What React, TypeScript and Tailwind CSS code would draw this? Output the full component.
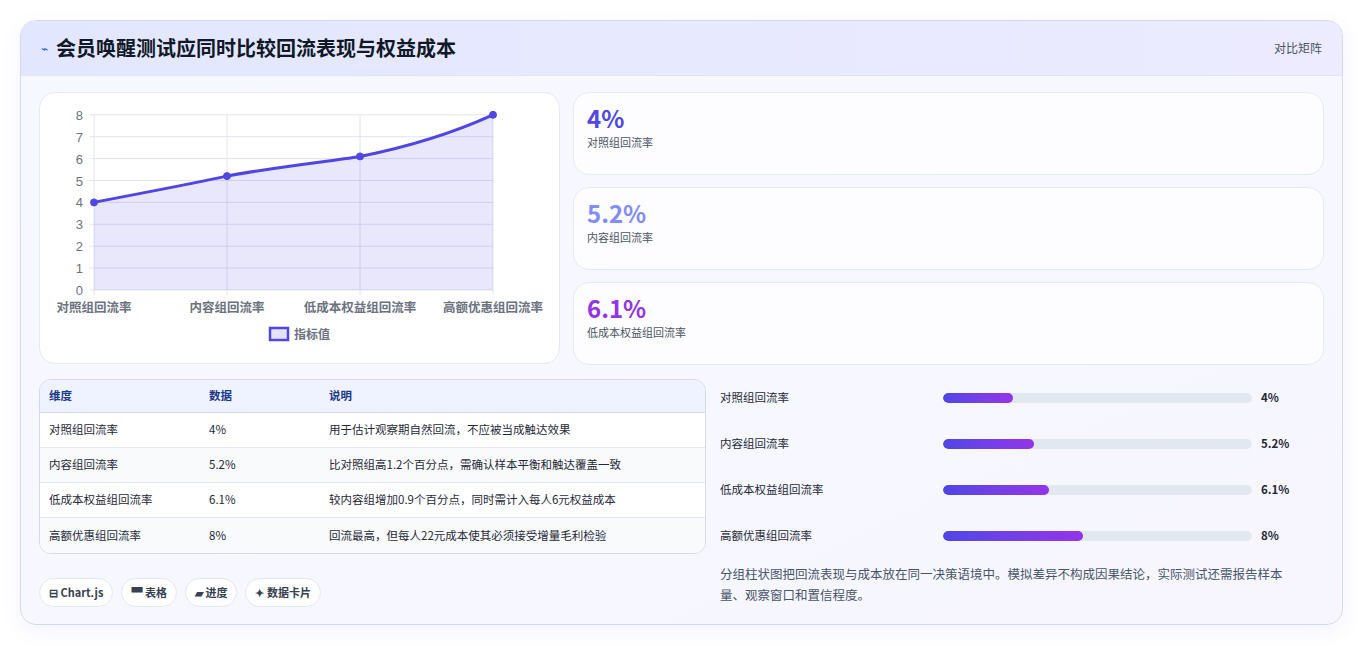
const font = { fontFamily: '"Noto Sans CJK SC", "Noto Sans", sans-serif' };

const rows = [
  { k: '对照组回流率', v: '4%', n: 4, d: '用于估计观察期自然回流，不应被当成触达效果' },
  { k: '内容组回流率', v: '5.2%', n: 5.2, d: '比对照组高1.2个百分点，需确认样本平衡和触达覆盖一致' },
  { k: '低成本权益组回流率', v: '6.1%', n: 6.1, d: '较内容组增加0.9个百分点，同时需计入每人6元权益成本' },
  { k: '高额优惠组回流率', v: '8%', n: 8, d: '回流最高，但每人22元成本使其必须接受增量毛利检验' },
];

function Chart() {
  const xs = [54, 187, 320, 453];
  const y = (v: number) => 197 - v * 21.9;
  const pts = rows.map((r, i) => [xs[i], y(r.n)]);
  const line = `M${pts[0][0]},${pts[0][1]} C100,${pts[0][1] - 9} 150,${pts[1][1] + 8} 187,${pts[1][1]} C240,${pts[1][1] - 10} 290,${pts[2][1] + 5} 320,${pts[2][1]} C380,${pts[2][1] - 12} 420,${pts[3][1] + 15} 453,${pts[3][1]}`;
  return (
    <svg width="520" height="271" className="block">
      {[0, 1, 2, 3, 4, 5, 6, 7, 8].map((v) => (
        <g key={v}>
          <line x1="50" x2="453" y1={y(v)} y2={y(v)} stroke="#e2e4ee" />
          <text x="43" y={y(v) + 5} fontSize="13" fill="#6b7280" textAnchor="end" fontFamily="Liberation Sans">{v}</text>
        </g>
      ))}
      {xs.map((x) => (
        <line key={x} x1={x} x2={x} y1={y(8)} y2={y(0) + 5} stroke="#e2e4ee" />
      ))}
      <path d={`${line} L453,${y(0)} L54,${y(0)} Z`} fill="rgba(79,70,229,0.13)" />
      <path d={line} fill="none" stroke="#4f46e5" strokeWidth="3" />
      {pts.map(([a, b], i) => (
        <circle key={i} cx={a} cy={b} r="3.5" fill="#4f46e5" stroke="#4f46e5" strokeWidth="1" />
      ))}
      {rows.map((r, i) => (
        <text key={i} x={xs[i]} y="219" fontSize="12.5" fill="#6b7280" textAnchor="middle" fontWeight="600" style={font}>{r.k}</text>
      ))}
      <rect x="230" y="235" width="18" height="12" fill="rgba(79,70,229,0.15)" stroke="#4f46e5" strokeWidth="2.5" />
      <text x="254" y="246" fontSize="12" fill="#6b7280" fontWeight="600" style={font}>指标值</text>
    </svg>
  );
}

export default function App() {
  const stats = [
    { v: '4%', l: '对照组回流率', c: 'text-[#4f46e5]' },
    { v: '5.2%', l: '内容组回流率', c: 'text-[#818cf8]' },
    { v: '6.1%', l: '低成本权益组回流率', c: 'text-[#9333ea]' },
  ];
  return (
    <div className="w-[1363px] h-[646px] bg-white p-5" style={font}>
      <div className="h-[605px] rounded-2xl border border-[#d4d8f5] bg-gradient-to-br from-[#f6f8ff] to-[#f7f6ff] overflow-hidden shadow-[0_6px_20px_rgba(99,102,241,0.08)]">
        <div className="h-[55px] flex items-center justify-between px-5 bg-gradient-to-r from-[#e2e7ff] to-[#ecebff] border-b border-[#e0e4fb]">
          <div className="flex items-center gap-2">
            <span className="text-[#2563eb] text-xs">⌁</span>
            <h1 className="text-xl font-bold text-[#111827]">会员唤醒测试应同时比较回流表现与权益成本</h1>
          </div>
          <span className="text-xs text-[#4b5563]">对比矩阵</span>
        </div>
        <div className="pl-[18px] pr-[18px] pt-[16px]">
          <div className="flex gap-[13px]">
            <div className="w-[521px] h-[272px] bg-white rounded-2xl border border-[#e5e8f5]">
              <Chart />
            </div>
            <div className="flex-1 flex flex-col gap-[12px]">
              {stats.map((s) => (
                <div key={s.l} className="h-[83px] bg-white/80 rounded-2xl border border-[#e5e8f5] px-[13px] pt-[9px]">
                  <div className={`text-2xl font-bold ${s.c}`}>{s.v}</div>
                  <div className="text-[11px] text-[#4b5563]">{s.l}</div>
                </div>
              ))}
            </div>
          </div>
          <div className="flex gap-[14px] mt-[14px]">
            <div className="w-[667px]">
              <div className="rounded-xl border border-[#d4daea] overflow-hidden bg-white/60 text-[11.5px]">
                <div className="grid grid-cols-[160px_120px_1fr] h-[33px] items-center px-[9px] bg-[#eef3ff] border-b border-[#d4daea] font-semibold text-[#1e3a8a]">
                  <span>维度</span><span>数据</span><span>说明</span>
                </div>
                {rows.map((r, i) => (
                  <div key={r.k} className={`grid grid-cols-[160px_120px_1fr] h-[35px] items-center px-[9px] text-[#1f2937] ${i < 3 ? 'border-b border-[#e5e8f0]' : ''} ${i % 2 ? 'bg-[#f8fafc]' : 'bg-white'}`}>
                    <span>{r.k}</span><span>{r.v}</span><span>{r.d}</span>
                  </div>
                ))}
              </div>
              <div className="flex gap-2 mt-[24px]">
                {['⊟ Chart.js', '▀ 表格', '▰ 进度', '✦ 数据卡片'].map((t) => (
                  <span key={t} className="h-[29px] px-[9px] flex items-center rounded-full border border-[#e2e6f0] bg-white text-[11px] font-semibold text-[#374151]">{t}</span>
                ))}
              </div>
            </div>
            <div className="flex-1 pr-5">
              <div className="flex flex-col gap-[28px] pt-[10px]">
                {rows.map((r) => (
                  <div key={r.k} className="flex items-center h-[18px] text-[11.5px] text-[#1f2937]">
                    <span className="w-[223px]">{r.k}</span>
                    <div className="w-[309px] h-[10px] rounded-full bg-[#e2e8f0] overflow-hidden">
                      <div className="h-full rounded-full bg-gradient-to-r from-[#4f46e5] to-[#9333ea]" style={{ width: `${r.n * 5.65}%` }} />
                    </div>
                    <span className="ml-[9px] font-semibold">{r.v}</span>
                  </div>
                ))}
              </div>
              <p className="mt-[18px] text-[12.5px] leading-[21px] text-[#475569]">分组柱状图把回流表现与成本放在同一决策语境中。模拟差异不构成因果结论，实际测试还需报告样本量、观察窗口和置信程度。</p>
            </div>
          </div>
        </div>
      </div>
    </div>
  );
}
